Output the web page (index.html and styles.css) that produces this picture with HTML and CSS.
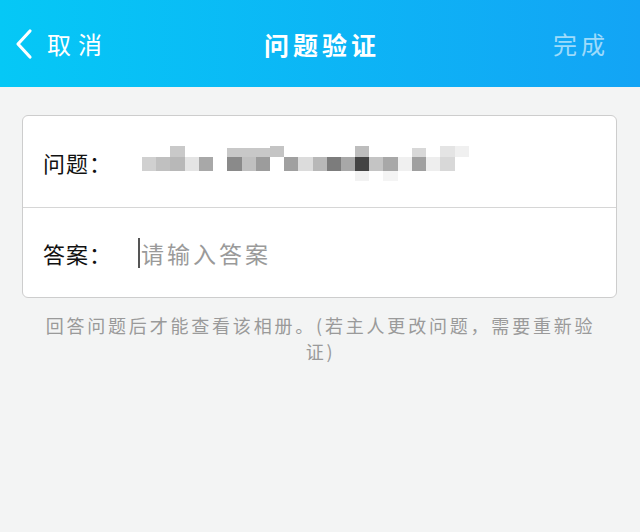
FILE: index.html
```html
<!DOCTYPE html>
<html lang="zh-CN">
<head>
    <meta charset="UTF-8">
    <meta name="viewport" content="width=device-width, initial-scale=1.0">
    <title>问题验证</title>
    <link rel="stylesheet" href="styles.css">
</head>
<body>
    <header class="topbar">
        <div class="topbar-left">
            <svg class="back-icon" width="20" height="32" viewBox="0 0 20 32">
                <path d="M16 3 L4 16 L16 29" fill="none" stroke="#fff" stroke-width="3.2" stroke-linecap="round" stroke-linejoin="round"/>
            </svg>
            <span class="cancel">取消</span>
        </div>
        <h1 class="title">问题验证</h1>
        <div class="topbar-right">
            <span class="done">完成</span>
        </div>
    </header>

    <main class="content">
        <div class="card">
            <div class="row">
                <span class="label">问题：</span>
                <svg class="mosaic" width="330" height="42" viewBox="0 0 330 42">
                    <!-- pixelated question text -->
                    <rect x="28" y="0" width="15" height="11" fill="#c9c9c9"/>
                    <rect x="85" y="2" width="43" height="9" fill="#c8c8c8"/>
                    <rect x="128" y="0" width="14" height="11" fill="#c4c4c4"/>
                    <rect x="213" y="0" width="14" height="11" fill="#bdbdbd"/>
                    <rect x="270" y="2" width="14" height="9" fill="#d8d8d8"/>
                    <rect x="298" y="0" width="15" height="11" fill="#e4e4e4"/>
                    <rect x="313" y="0" width="14" height="11" fill="#f0f0f0"/>
                    <rect x="0" y="11" width="14" height="14" fill="#d0d0d0"/>
                    <rect x="14" y="11" width="14" height="14" fill="#c0c0c0"/>
                    <rect x="28" y="11" width="15" height="14" fill="#b8b8b8"/>
                    <rect x="43" y="11" width="14" height="14" fill="#e4e4e4"/>
                    <rect x="57" y="11" width="14" height="14" fill="#a8a8a8"/>
                    <rect x="85" y="11" width="15" height="14" fill="#8a8a8a"/>
                    <rect x="100" y="11" width="14" height="14" fill="#c0c0c0"/>
                    <rect x="114" y="11" width="14" height="14" fill="#9c9c9c"/>
                    <rect x="142" y="11" width="14" height="14" fill="#a0a0a0"/>
                    <rect x="156" y="11" width="15" height="14" fill="#dcdcdc"/>
                    <rect x="171" y="11" width="14" height="14" fill="#b8b8b8"/>
                    <rect x="185" y="11" width="14" height="14" fill="#7c7c7c"/>
                    <rect x="199" y="11" width="14" height="14" fill="#a8a8a8"/>
                    <rect x="213" y="11" width="14" height="14" fill="#444444"/>
                    <rect x="227" y="11" width="14" height="14" fill="#c4c4c4"/>
                    <rect x="241" y="11" width="15" height="14" fill="#a8a8a8"/>
                    <rect x="256" y="11" width="14" height="14" fill="#f0f0f0"/>
                    <rect x="270" y="11" width="14" height="14" fill="#a0a0a0"/>
                    <rect x="284" y="11" width="14" height="14" fill="#eeeeee"/>
                    <rect x="298" y="11" width="15" height="14" fill="#d8d8d8"/>
                    <rect x="213" y="25" width="14" height="10" fill="#f2f2f2"/>
                    <rect x="241" y="25" width="15" height="10" fill="#f4f4f4"/>
                </svg>
            </div>
            <div class="row">
                <span class="label">答案：</span>
                <div class="input">
                    <span class="caret"></span>
                    <span class="placeholder">请输入答案</span>
                </div>
            </div>
        </div>
        <p class="hint">回答问题后才能查看该相册。(若主人更改问题，需要重新验证)</p>
    </main>
</body>
</html>
```

FILE: styles.css
```css
:root {
    --bg-color: #f3f4f4;
    --bar-left: #05c8f6;
    --bar-right: #13a4f5;
    --border: #cdcdcd;
    --muted: #9a9a9a;
}

* {
    box-sizing: border-box;
}

body {
    margin: 0;
    background-color: var(--bg-color);
    font-family: "Noto Sans CJK SC", "Noto Sans", sans-serif;
    color: #111;
}

.topbar {
    height: 87px;
    display: grid;
    grid-template-columns: 1fr auto 1fr;
    align-items: center;
    background: linear-gradient(90deg, var(--bar-left), var(--bar-right));
    color: #fff;
}

.topbar-left {
    display: flex;
    align-items: center;
    padding-left: 14px;
    gap: 13px;
}

.back-icon {
    display: block;
}

.cancel {
    font-size: 24px;
    letter-spacing: 7px;
}

.title {
    margin: 0;
    font-size: 25px;
    font-weight: 700;
    letter-spacing: 4px;
    padding-left: 4px;
}

.topbar-right {
    display: flex;
    justify-content: flex-end;
    padding-right: 31px;
}

.done {
    font-size: 24px;
    letter-spacing: 4px;
    color: rgba(255, 255, 255, 0.6);
}

.content {
    padding: 28px 23px 0 22px;
}

.card {
    background-color: #fff;
    border: 1px solid var(--border);
    border-radius: 6px;
}

.row {
    height: 91px;
    display: flex;
    align-items: center;
    padding-left: 20px;
}

.row + .row {
    border-top: 1px solid #d6d6d6;
    height: 90px;
}

.label {
    width: 95px;
    font-size: 22px;
    letter-spacing: 1px;
}

.mosaic {
    display: block;
    margin-left: 4px;
    margin-top: 10px;
}

.input {
    display: flex;
    align-items: center;
}

.caret {
    width: 2px;
    height: 30px;
    background-color: #555;
    margin-right: 1px;
}

.placeholder {
    font-size: 23px;
    letter-spacing: 3px;
    color: var(--muted);
}

.hint {
    margin: 14px 16px 0 18px;
    font-size: 18px;
    line-height: 26px;
    letter-spacing: 2.8px;
    text-align: center;
    color: var(--muted);
}
```
